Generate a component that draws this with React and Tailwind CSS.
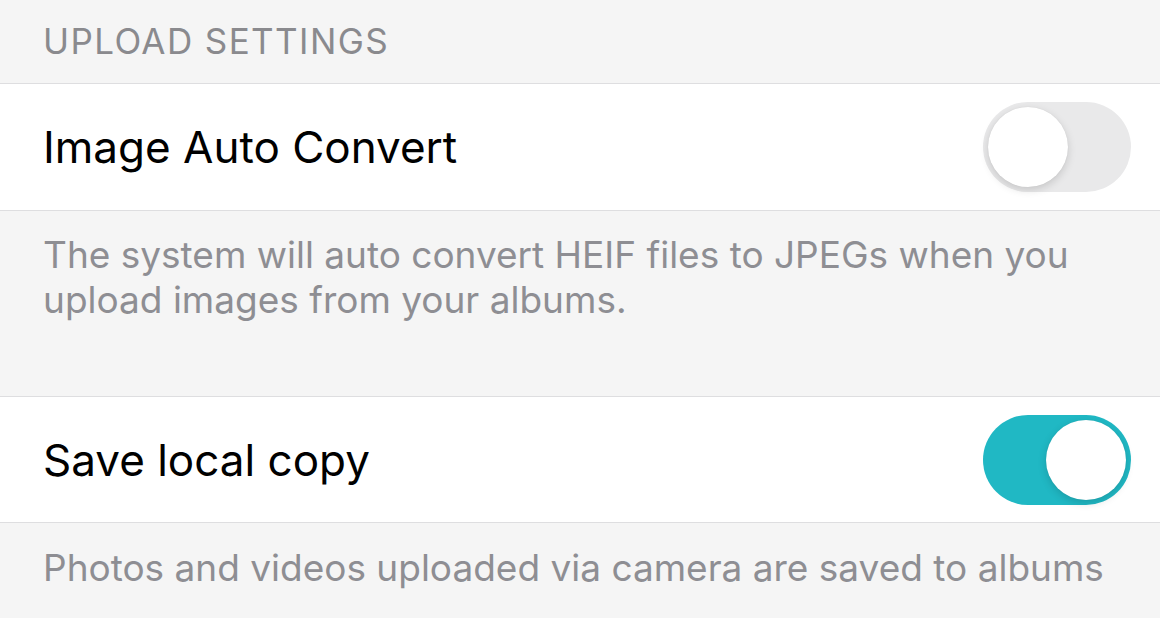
export default function App() {
  const font = { fontFamily: 'Inter, "Noto Sans", sans-serif' };
  return (
    <div className="w-[1160px] h-[618px] overflow-hidden bg-[#f5f5f5]" style={font}>
      <div className="h-[84px] border-b border-[#dedee0] pl-[43px] pt-[21px]">
        <span className="text-[35px] leading-[40px] text-[#8a8a8e] tracking-[1.4px]">UPLOAD SETTINGS</span>
      </div>
      <div className="h-[127px] bg-white border-b border-[#dedee0] flex items-center justify-between pl-[43px] pr-[29px]">
        <span className="text-[44px] text-black">Image Auto Convert</span>
        <div className="w-[148px] h-[90px] rounded-full bg-[#e9e9ea] relative">
          <div className="absolute left-[5px] top-[5px] w-[80px] h-[80px] rounded-full bg-white shadow-[0_3px_8px_rgba(0,0,0,0.15),0_0_1px_rgba(0,0,0,0.1)]"></div>
        </div>
      </div>
      <div className="h-[186px] border-b border-[#dedee0] pl-[43px] pr-[40px] pt-[21px]">
        <p className="text-[37px] leading-[45px] text-[#8e8e93]">The system will auto convert HEIF files to JPEGs when you upload images from your albums.</p>
      </div>
      <div className="h-[126px] bg-white border-b border-[#dedee0] flex items-center justify-between pl-[43px] pr-[29px]">
        <span className="text-[44px] text-black">Save local copy</span>
        <div className="w-[148px] h-[90px] rounded-full bg-[#20b8c4] relative">
          <div className="absolute right-[5px] top-[5px] w-[80px] h-[80px] rounded-full bg-white shadow-[0_3px_8px_rgba(0,0,0,0.15),0_0_1px_rgba(0,0,0,0.1)]"></div>
        </div>
      </div>
      <div className="pl-[43px] pt-[22px]">
        <p className="text-[37px] leading-[45px] text-[#8e8e93] whitespace-nowrap">Photos and videos uploaded via camera are saved to albums</p>
      </div>
    </div>
  );
}
